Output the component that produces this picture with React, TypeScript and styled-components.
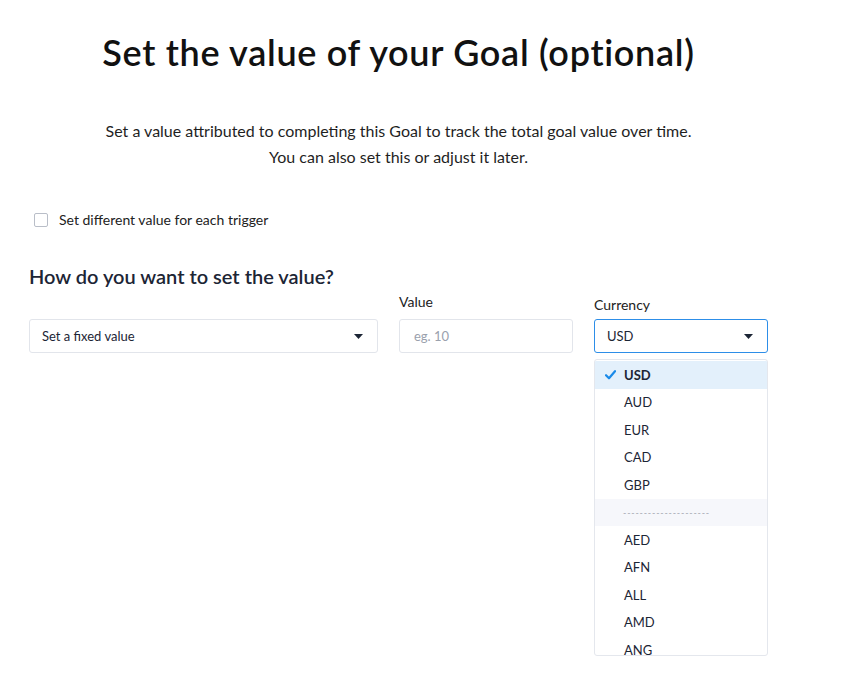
import * as React from 'react';
import styled, { createGlobalStyle } from 'styled-components';

const GlobalStyle = createGlobalStyle`
  html, body {
    margin: 0;
    background: #fff;
  }
  body {
    font-family: Lato, "Open Sans", Arial, sans-serif;
    color: #1b1b1b;
  }
  #root {
    min-height: 100vh;
  }
`;

const currencies = ['USD', 'AUD', 'EUR', 'CAD', 'GBP', '-', 'AED', 'AFN', 'ALL', 'AMD', 'ANG'];

const Caret = () => (
  <svg width="9" height="5" viewBox="0 0 9 5">
    <path d="M0 0h9L4.5 5z" fill="#1c2535" />
  </svg>
);

const Check = () => (
  <svg width="11" height="10" viewBox="0 0 11 10">
    <path d="M1 5.2l3 3.1L10 1.2" fill="none" stroke="#1a8ae8" strokeWidth="2.2" strokeLinecap="round" strokeLinejoin="round" />
  </svg>
);

export default function App() {
  return (
    <>
      <GlobalStyle />
      <Page>
        <Title>Set the value of your Goal (optional)</Title>
        <Intro>
          Set a value attributed to completing this Goal to track the total goal value over time.
          <br />
          You can also set this or adjust it later.
        </Intro>
        <CheckRow>
          <Box />
          <span>Set different value for each trigger</span>
        </CheckRow>
        <Heading>How do you want to set the value?</Heading>
        <Fields>
          <Field>
            <Select>
              <span>Set a fixed value</span>
              <Caret />
            </Select>
          </Field>
          <Field>
            <Label>Value</Label>
            <Input placeholder="eg. 10" />
          </Field>
          <Field>
            <Label $low>Currency</Label>
            <Select $focused>
              <span>USD</span>
              <Caret />
            </Select>
            <Menu>
              {currencies.map((c, i) =>
                c === '-' ? (
                  <Divider key={i}>---------------------</Divider>
                ) : (
                  <Option key={c} $selected={i === 0}>
                    <Tick>{i === 0 && <Check />}</Tick>
                    {c}
                  </Option>
                )
              )}
            </Menu>
          </Field>
        </Fields>
      </Page>
    </>
  );
}

const Page = styled.div`
  width: 768px;
  min-height: 675px;
  box-sizing: border-box;
  padding: 30px 0 0 29px;
  position: relative;
`;

const Title = styled.h1`
  margin: 0;
  text-align: center;
  font-size: 36px;
  font-weight: 600;
  line-height: 44px;
  color: #111;
  letter-spacing: 0.7px;
`;

const Intro = styled.p`
  margin: 44px 0 0;
  text-align: center;
  font-size: 16px;
  line-height: 26px;
  color: #1f1f1f;
`;

const CheckRow = styled.label`
  display: flex;
  align-items: center;
  gap: 11px;
  margin: 41px 0 0 5px;
  font-size: 14px;
  color: #222;
`;

const Box = styled.span`
  width: 12px;
  height: 12px;
  border: 1px solid #b9bec8;
  border-radius: 2px;
  background: #fff;
`;

const Heading = styled.h2`
  margin: 35px 0 0;
  font-size: 20px;
  font-weight: 600;
  line-height: 26px;
  color: #1c2535;
`;

const Fields = styled.div`
  display: grid;
  grid-template-columns: 349px 174px 174px;
  column-gap: 21px;
  align-items: end;
  margin-top: 4px;
`;

const Field = styled.div`
  position: relative;
  display: flex;
  flex-direction: column;
`;

const Label = styled.div<{ $low?: boolean }>`
  font-size: 14px;
  line-height: 18px;
  color: #222;
  margin-bottom: ${(p) => (p.$low ? '5px' : '8px')};
`;

const Select = styled.div<{ $focused?: boolean }>`
  height: 34px;
  box-sizing: border-box;
  display: flex;
  align-items: center;
  justify-content: space-between;
  padding: 0 14px 0 12px;
  border: 1px solid ${(p) => (p.$focused ? '#2d8ee8' : '#e2e5eb')};
  border-radius: 3px;
  font-size: 13px;
  color: #1c2535;
  background: #fff;
`;

const Input = styled.input`
  height: 34px;
  box-sizing: border-box;
  padding: 0 14px;
  border: 1px solid #e2e5eb;
  border-radius: 3px;
  font-family: inherit;
  font-size: 13px;
  outline: none;
  &::placeholder {
    color: #9aa1ad;
  }
`;

const Menu = styled.div`
  position: absolute;
  top: calc(100% + 6px);
  left: 0;
  right: 0;
  z-index: 2;
  height: 297px;
  overflow: hidden;
  box-sizing: border-box;
  padding-top: 1px;
  border: 1px solid #e4e7ed;
  border-radius: 3px;
  background: #fff;
`;

const Option = styled.div<{ $selected?: boolean }>`
  display: flex;
  align-items: center;
  height: 27.5px;
  flex-shrink: 0;
  font-size: 13px;
  color: #1c2535;
  font-weight: ${(p) => (p.$selected ? 700 : 400)};
  background: ${(p) => (p.$selected ? '#e3f0fb' : 'transparent')};
`;

const Tick = styled.span`
  display: flex;
  justify-content: center;
  width: 29px;
  padding-left: 2px;
  box-sizing: border-box;
`;

const Divider = styled.div`
  display: flex;
  align-items: center;
  height: 27.5px;
  padding-left: 28px;
  background: #f6f7fb;
  font-size: 9px;
  letter-spacing: 0.8px;
  color: #a3a8b2;
`;
